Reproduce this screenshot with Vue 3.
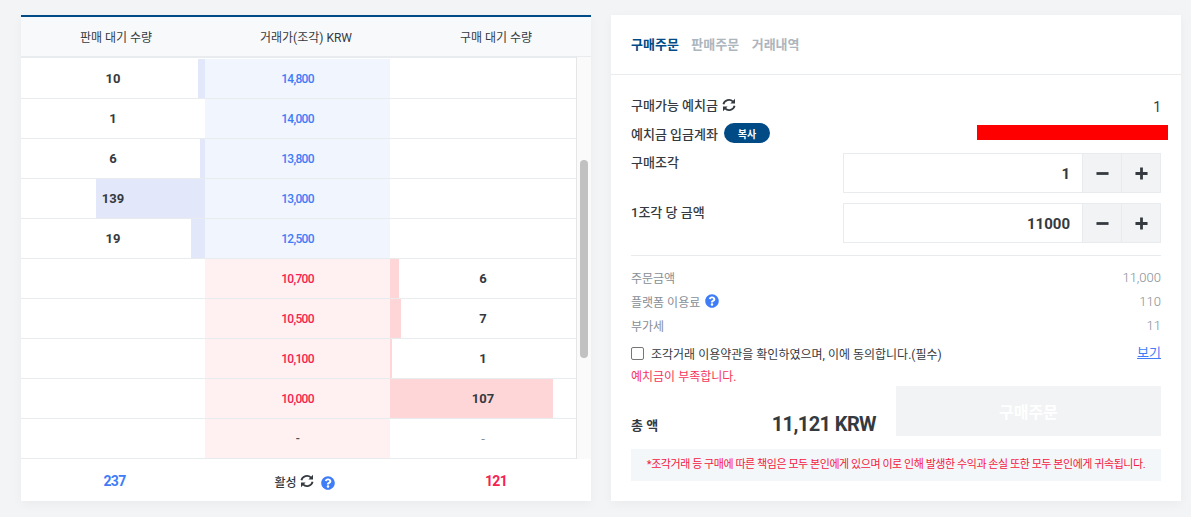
<template>
  <div class="page">
    <section class="book">
      <div class="book__head">
        <div>판매 대기 수량</div>
        <div>거래가(조각) KRW</div>
        <div>구매 대기 수량</div>
      </div>
      <div class="book__body">
        <div class="book__rows">
          <div v-for="row in rows" :key="row.price" class="row">
            <div class="cell">
              <span v-if="row.sellBar" class="bar bar--sell" :style="{ width: row.sellBar + 'px' }"></span>
              <span class="qty">{{ row.sell }}</span>
            </div>
            <div class="cell price" :class="`price--${row.side}`">{{ row.price }}</div>
            <div class="cell">
              <span v-if="row.buyBar" class="bar bar--buy" :style="{ width: row.buyBar + 'px' }"></span>
              <span class="qty" :class="{ 'qty--empty': row.buy === '-' }">{{ row.buy }}</span>
            </div>
          </div>
        </div>
        <div class="scrollbar"><div class="scrollbar__thumb"></div></div>
      </div>
      <div class="book__foot">
        <div class="total total--sell">237</div>
        <div class="status">
          <span>활성</span>
          <svg class="icon-sync" viewBox="0 0 14 14">
            <path class="icon-sync__arc" d="M1.4 6.2A5.7 5.7 0 0 1 11 3.6M12.6 7.8A5.7 5.7 0 0 1 3 10.4" />
            <path d="M13 .8v4.6H8.4zM1 13.2V8.6h4.6z" />
          </svg>
          <svg class="icon-help" viewBox="0 0 512 512"><path :d="helpPath" /></svg>
        </div>
        <div class="total total--buy">121</div>
      </div>
    </section>

    <section class="order">
      <div class="tabs">
        <a class="tab tab--active">구매주문</a>
        <a class="tab">판매주문</a>
        <a class="tab">거래내역</a>
      </div>
      <div class="order__body">
        <div class="line line--first">
          <div class="label">
            구매가능 예치금
            <svg class="icon-sync" viewBox="0 0 14 14">
              <path class="icon-sync__arc" d="M1.4 6.2A5.7 5.7 0 0 1 11 3.6M12.6 7.8A5.7 5.7 0 0 1 3 10.4" />
              <path d="M13 .8v4.6H8.4zM1 13.2V8.6h4.6z" />
            </svg>
          </div>
          <div class="balance">1</div>
        </div>
        <div class="line line--account">
          <div class="label">
            예치금 입금계좌
            <button type="button" class="copy">복사</button>
          </div>
          <div class="account">
            <span class="account__text">(</span>
            <span class="account__text account__text--end">)</span>
            <span class="redact"></span>
          </div>
        </div>
        <div class="field">
          <label class="field__label">구매조각</label>
          <div class="stepper">
            <input class="stepper__input" value="1" />
            <button type="button" class="stepper__btn">
              <svg viewBox="0 0 14 14"><path d="M0.5 7h13" /></svg>
            </button>
            <button type="button" class="stepper__btn">
              <svg viewBox="0 0 14 14"><path d="M0.5 7h13M7 0.5v13" /></svg>
            </button>
          </div>
        </div>
        <div class="field">
          <label class="field__label">1조각 당 금액</label>
          <div class="stepper">
            <input class="stepper__input" value="11000" />
            <button type="button" class="stepper__btn">
              <svg viewBox="0 0 14 14"><path d="M0.5 7h13" /></svg>
            </button>
            <button type="button" class="stepper__btn">
              <svg viewBox="0 0 14 14"><path d="M0.5 7h13M7 0.5v13" /></svg>
            </button>
          </div>
        </div>
        <div class="fees">
          <div class="fee"><span>주문금액</span><span class="fee__num">11,000</span></div>
          <div class="fee">
            <span class="fee__name">
              플랫폼 이용료
              <svg class="icon-help" viewBox="0 0 512 512"><path :d="helpPath" /></svg>
            </span>
            <span class="fee__num">110</span>
          </div>
          <div class="fee"><span>부가세</span><span class="fee__num">11</span></div>
        </div>
        <div class="agree">
          <label class="agree__label">
            <span class="check"></span>
            조각거래 이용약관을 확인하였으며, 이에 동의합니다.(필수)
          </label>
          <a class="agree__link">보기</a>
        </div>
        <div class="error">예치금이 부족합니다.</div>
        <div class="submit">
          <div class="submit__label">총 액</div>
          <div class="submit__sum">11,121 KRW</div>
          <button type="button" class="submit__btn">구매주문</button>
        </div>
        <div class="notice">*조각거래 등 구매에 따른 책임은 모두 본인에게 있으며 이로 인해 발생한 수익과 손실 또한 모두 본인에게 귀속됩니다.</div>
      </div>
    </section>
  </div>
</template>

<script setup>
const helpPath = 'M504 256c0 136.997-111.043 248-248 248S8 392.997 8 256C8 119.083 119.043 8 256 8s248 111.083 248 248zM262.655 90c-54.497 0-89.255 22.957-116.549 63.758-3.536 5.286-2.353 12.415 2.715 16.258l34.699 26.31c5.205 3.947 12.621 3.008 16.665-2.122 17.864-22.658 30.113-35.797 57.303-35.797 20.429 0 45.698 13.148 45.698 32.958 0 14.976-12.363 22.667-32.534 33.976C247.128 238.528 216 254.941 216 296v4c0 6.627 5.373 12 12 12h56c6.627 0 12-5.373 12-12v-1.333c0-28.462 83.186-29.647 83.186-106.667 0-58.002-60.165-102-116.531-102zM256 338c-25.365 0-46 20.635-46 46 0 25.364 20.635 46 46 46s46-20.636 46-46c0-25.365-20.635-46-46-46z'

const rows = [
  { side: 'sell', sell: '10', sellBar: 7, price: '14,800', buy: '', buyBar: 0 },
  { side: 'sell', sell: '1', sellBar: 0, price: '14,000', buy: '', buyBar: 0 },
  { side: 'sell', sell: '6', sellBar: 5, price: '13,800', buy: '', buyBar: 0 },
  { side: 'sell', sell: '139', sellBar: 109, price: '13,000', buy: '', buyBar: 0 },
  { side: 'sell', sell: '19', sellBar: 14, price: '12,500', buy: '', buyBar: 0 },
  { side: 'buy', sell: '', sellBar: 0, price: '10,700', buy: '6', buyBar: 9 },
  { side: 'buy', sell: '', sellBar: 0, price: '10,500', buy: '7', buyBar: 11 },
  { side: 'buy', sell: '', sellBar: 0, price: '10,100', buy: '1', buyBar: 2 },
  { side: 'buy', sell: '', sellBar: 0, price: '10,000', buy: '107', buyBar: 163 },
  { side: 'none', sell: '', sellBar: 0, price: '-', buy: '-', buyBar: 0 }
]
</script>

<style>
html,
body {
  margin: 0;
  background: #f3f4f6;
}
</style>

<style scoped>
.page {
  display: flex;
  align-items: flex-start;
  gap: 20px;
  height: 517px;
  box-sizing: border-box;
  padding: 15px 10px 0 21px;
  overflow: hidden;
  font-family: Roboto, "Noto Sans CJK KR", sans-serif;
  color: #343a40;
}

.book,
.order {
  width: 570px;
  height: 486px;
  box-sizing: border-box;
  background: #fff;
  box-shadow: 0 3px 10px rgba(0, 0, 0, 0.04);
}

.book {
  display: flex;
  flex-direction: column;
  border-top: 2px solid #004a85;
}

.book__head {
  display: grid;
  grid-template-columns: repeat(3, 1fr);
  height: 40px;
  flex-shrink: 0;
  box-sizing: border-box;
  border-bottom: 1px solid #e9ecef;
  background: #f8f9fb;
  font-size: 12px;
  color: #343a40;
}

.book__head > div {
  display: flex;
  align-items: center;
  justify-content: center;
}

.book__body {
  display: flex;
  height: 402px;
}

.book__rows {
  width: 555px;
  border-top: 1px solid #e9ecef;
}

.row {
  display: grid;
  grid-template-columns: 184px 185px 186px;
  height: 40px;
  box-sizing: border-box;
  border-bottom: 1px solid #e9ecef;
}

.row:first-child {
  margin-top: 1px;
}

.cell {
  position: relative;
  display: flex;
  align-items: center;
  justify-content: center;
  height: 39px;
}

.bar {
  position: absolute;
  top: 0;
  height: 39px;
}

.bar--sell {
  right: 0;
  background: #e2e8fa;
}

.bar--buy {
  left: 0;
  background: #ffd6d8;
}

.qty {
  position: relative;
  font-size: 13px;
  font-weight: 700;
  color: #343a40;
}

.qty--empty {
  font-weight: 400;
  color: #868e96;
}

.price {
  font-size: 12px;
  font-weight: 500;
  letter-spacing: -0.7px;
}

.price--sell {
  background: #f0f5fe;
  color: #3f7cf7;
}

.price--buy {
  background: #fff0f2;
  color: #f5224f;
}

.price--none {
  background: #fff0f2;
  color: #495057;
}

.scrollbar {
  width: 15px;
  box-sizing: border-box;
  border-left: 1px solid #e6e6e6;
  background: #fafafa;
}

.scrollbar__thumb {
  width: 8px;
  height: 198px;
  margin: 103px 0 0 3px;
  border-radius: 4px;
  background: #c1c1c1;
}

.book__foot {
  display: grid;
  grid-template-columns: repeat(3, 1fr);
  flex: 1;
  align-items: center;
  justify-items: center;
  padding-top: 2px;
  background: #fff;
}

.total {
  font-size: 14px;
  font-weight: 700;
  letter-spacing: -0.7px;
}

.total--sell {
  margin-right: 3px;
  color: #3f7cf7;
}

.total--buy {
  color: #f5224f;
}

.status {
  display: flex;
  align-items: center;
  padding-right: 3px;
  font-size: 12px;
  font-weight: 500;
}

.status .icon-sync {
  margin-left: 3px;
}

.status .icon-help {
  margin: 3px 0 0 7px;
}

.icon-sync {
  width: 14px;
  height: 14px;
  fill: #343a40;
}

.icon-sync__arc {
  fill: none;
  stroke: #343a40;
  stroke-width: 1.8;
}

.icon-help {
  width: 14px;
  height: 14px;
  fill: #3f7cf7;
}

.order {
  display: flex;
  flex-direction: column;
}

.tabs {
  display: flex;
  gap: 12.5px;
  height: 60px;
  flex-shrink: 0;
  box-sizing: border-box;
  padding: 20px 20px 0;
  border-bottom: 1px solid #e9ecef;
}

.tab {
  font-size: 13px;
  font-weight: 700;
  line-height: 20px;
  color: #adb5bd;
}

.tab--active {
  color: #004a85;
}

.order__body {
  flex: 1;
  padding: 0 20px;
}

.line {
  display: flex;
  align-items: center;
  justify-content: space-between;
  height: 28px;
}

.line--first {
  height: 29px;
  margin-top: 15px;
}

.line--account {
  margin-bottom: 6px;
}

.label {
  display: flex;
  align-items: center;
  gap: 4px;
  font-size: 13px;
  font-weight: 500;
  color: #343a40;
}

.balance {
  padding-top: 4px;
  font-size: 14px;
  color: #343a40;
}

.copy {
  margin-left: 2px;
  width: 46px;
  height: 20px;
  padding: 0;
  border: 0;
  border-radius: 10px;
  background: #004a85;
  color: #fff;
  font-family: inherit;
  font-size: 10px;
  font-weight: 700;
}

.account {
  position: relative;
  width: 184px;
  height: 16px;
  font-size: 8px;
  color: #495057;
}

.account__text {
  position: absolute;
  left: 8px;
  top: 5px;
}

.account__text--end {
  left: 62px;
}

.redact {
  position: absolute;
  top: 0;
  left: 0;
  right: -7px;
  height: 15px;
  background: #f00;
}

.field {
  display: flex;
  justify-content: space-between;
  height: 40px;
  margin-bottom: 10px;
}

.field__label {
  font-size: 13px;
  font-weight: 500;
  line-height: 20px;
  color: #343a40;
}

.stepper {
  display: flex;
  width: 318px;
  box-sizing: border-box;
  border: 1px solid #e9ecef;
}

.stepper__input {
  flex: 1;
  min-width: 0;
  box-sizing: border-box;
  padding: 2px 12px 0 0;
  border: 0;
  outline: none;
  text-align: right;
  font-family: inherit;
  font-size: 15px;
  font-weight: 700;
  color: #343a40;
}

.stepper__btn {
  display: flex;
  align-items: center;
  justify-content: center;
  width: 39px;
  padding: 0;
  border: 0;
  border-left: 1px solid #e9ecef;
  background: #f1f3f5;
}

.stepper__btn svg {
  width: 13px;
  height: 13px;
  fill: none;
  stroke: #343a40;
  stroke-width: 3;
}

.fees {
  margin-top: 12px;
  padding-top: 9px;
  border-top: 1px solid #e9ecef;
}

.fee {
  display: flex;
  align-items: center;
  justify-content: space-between;
  height: 24px;
  font-size: 12px;
  color: #868e96;
}

.fee__name {
  display: flex;
  align-items: center;
  gap: 5px;
}

.fee__num {
  font-size: 13px;
  font-weight: 300;
}

.agree {
  display: flex;
  align-items: center;
  justify-content: space-between;
  height: 20px;
  margin-top: 6px;
  font-size: 12px;
}

.agree__label {
  display: flex;
  align-items: center;
  gap: 7px;
  color: #343a40;
}

.check {
  width: 13px;
  height: 13px;
  box-sizing: border-box;
  border: 1px solid #767676;
  border-radius: 2px;
  background: #fff;
}

.agree__link {
  margin-top: -3px;
  font-size: 13px;
  color: #3f7cf7;
  text-decoration: underline;
}

.error {
  margin-top: 5px;
  font-size: 12px;
  line-height: 18px;
  color: #f7335c;
}

.submit {
  display: flex;
  align-items: flex-end;
  height: 50px;
  margin-top: 0;
}

.submit__label {
  width: 60px;
  font-size: 13px;
  font-weight: 700;
  line-height: 18px;
  margin-bottom: 1px;
}

.submit__sum {
  width: 185px;
  font-size: 20px;
  font-weight: 700;
  line-height: 24px;
  text-align: right;
  letter-spacing: -0.6px;
}

.submit__btn {
  width: 265px;
  height: 50px;
  margin-left: 20px;
  border: 0;
  background: #f1f3f5;
  color: #fff;
  font-family: inherit;
  font-size: 16px;
  font-weight: 700;
}

.notice {
  margin-top: 13px;
  height: 32px;
  background: #f3f7fa;
  font-size: 11px;
  line-height: 31px;
  letter-spacing: -0.44px;
  text-align: center;
  color: #f5173f;
}
</style>
